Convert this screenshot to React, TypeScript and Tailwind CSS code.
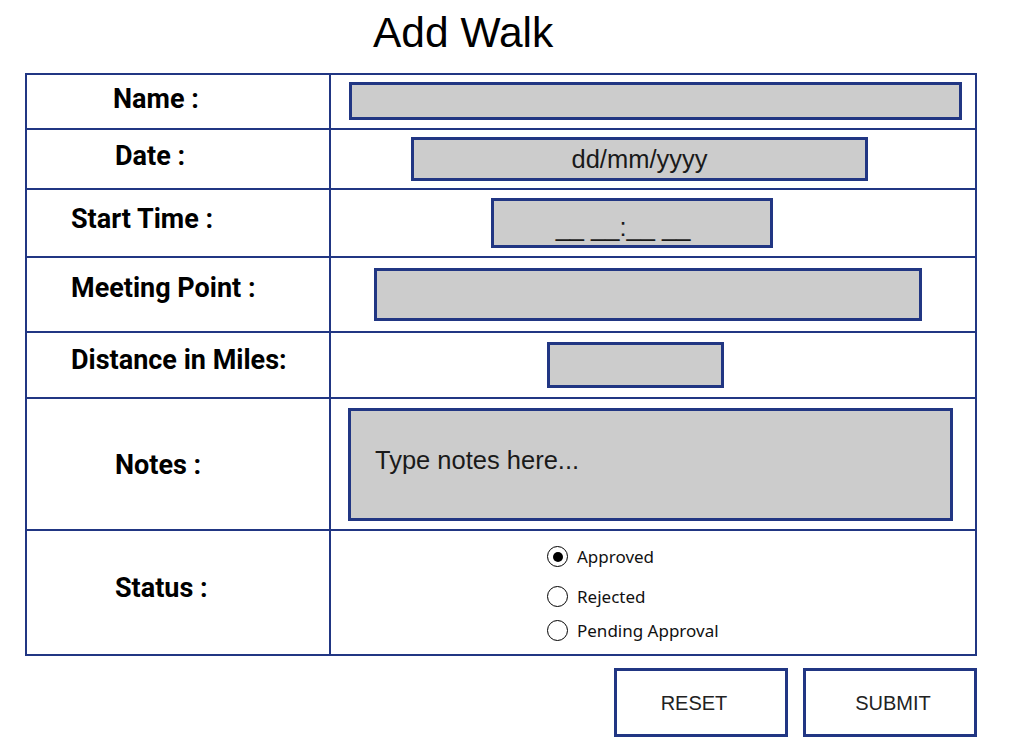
import React from "react";

const NAVY = "border-[#213683]";

function Row({
  h,
  label,
  labelPl,
  labelPt,
  children,
}: {
  h: string;
  label: string;
  labelPl: string;
  labelPt: string;
  children: React.ReactNode;
}) {
  return (
    <div className={`flex border-b-2 border-[#213683] ${h}`}>
      <div className={`flex w-[304px] shrink-0 items-center border-r-2 border-[#213683] ${labelPl} ${labelPt}`}>
        <span className="font-['Roboto',sans-serif] text-[27px] font-bold leading-none text-black">{label}</span>
      </div>
      <div className="flex flex-1 items-center">{children}</div>
    </div>
  );
}

function Radio({ label, checked }: { label: string; checked?: boolean }) {
  return (
    <div className="flex h-[21px] items-center gap-[9px]">
      <div className="flex h-[21px] w-[21px] items-center justify-center rounded-full border-[1.5px] border-black bg-white">
        {checked && <div className="h-[10px] w-[10px] rounded-full bg-black" />}
      </div>
      <span className="font-['Noto_Sans',sans-serif] text-[17px] leading-none text-[#111]">{label}</span>
    </div>
  );
}

export default function App() {
  return (
    <div className="min-h-[742px] w-[1013px] bg-white font-['Liberation_Sans',Arial,sans-serif]">
      <div className="pl-[373px] pt-[12px]">
        <h1 className="text-[42.5px] leading-[42px] font-normal text-black">Add Walk</h1>
      </div>
      <div className={`ml-[25px] mt-[19px] w-[952px] border-x-2 border-t-2 ${NAVY}`}>
        <Row h="h-[55px]" label="Name :" labelPl="pl-[86px]" labelPt="pb-[4px]">
          <div className="ml-[18px] mb-[2px] h-[38px] w-[613px] border-[3px] border-[#213683] bg-[#cccccc]" />
        </Row>
        <Row h="h-[60px]" label="Date :" labelPl="pl-[88px]" labelPt="pb-[6px]">
          <div className="ml-[80px] flex h-[44px] w-[457px] items-center justify-center border-[3px] border-[#213683] bg-[#cccccc] text-[25.5px] text-[#1a1a1a]">
            dd/mm/yyyy
          </div>
        </Row>
        <Row h="h-[68px]" label="Start Time :" labelPl="pl-[44px]" labelPt="pb-[8px]">
          <div className="ml-[160px] flex h-[50px] w-[282px] items-center justify-center border-[3px] border-[#213683] bg-[#cccccc] pr-[18px] pt-[8px] text-[25.5px] text-[#1a1a1a]">
            __ __:__ __
          </div>
        </Row>
        <Row h="h-[75px]" label="Meeting Point :" labelPl="pl-[44px]" labelPt="pb-[12px]">
          <div className="ml-[43px] h-[53px] w-[548px] border-[3px] border-[#213683] bg-[#cccccc]" />
        </Row>
        <Row h="h-[66px]" label="Distance in Miles:" labelPl="pl-[44px]" labelPt="pb-[10px]">
          <div className="ml-[216px] h-[46px] w-[177px] border-[3px] border-[#213683] bg-[#cccccc]" />
        </Row>
        <Row h="h-[132px]" label="Notes :" labelPl="pl-[88px]" labelPt="pt-[2px]">
          <div className="ml-[17px] h-[113px] w-[605px] border-[3px] border-[#213683] bg-[#cccccc] pl-[24px] pt-[35px] text-[25.5px] leading-[29px] text-[#1a1a1a]">
            Type notes here...
          </div>
        </Row>
        <div className="flex h-[125px] border-b-2 border-[#213683]">
          <div className="flex w-[304px] shrink-0 items-center border-r-2 border-[#213683] pl-[88px] pb-[8px]">
            <span className="font-['Roboto',sans-serif] text-[27px] font-bold leading-none text-black">Status :</span>
          </div>
          <div className="flex flex-1 flex-col pl-[216px] pt-[15px]">
            <Radio label="Approved" checked />
            <div className="h-[19px]" />
            <Radio label="Rejected" />
            <div className="h-[13px]" />
            <Radio label="Pending Approval" />
          </div>
        </div>
      </div>
      <div className="ml-[25px] mt-[12px] flex w-[952px] justify-end gap-[15px]">
        <button className="flex h-[69px] w-[174px] items-center justify-center border-[3px] border-[#213683] bg-white pr-[14px] pt-[1px] text-[20px] text-[#222]">
          RESET
        </button>
        <button className="flex h-[69px] w-[174px] items-center justify-center border-[3px] border-[#213683] bg-white pl-[6px] pt-[1px] text-[20px] text-[#222]">
          SUBMIT
        </button>
      </div>
    </div>
  );
}
